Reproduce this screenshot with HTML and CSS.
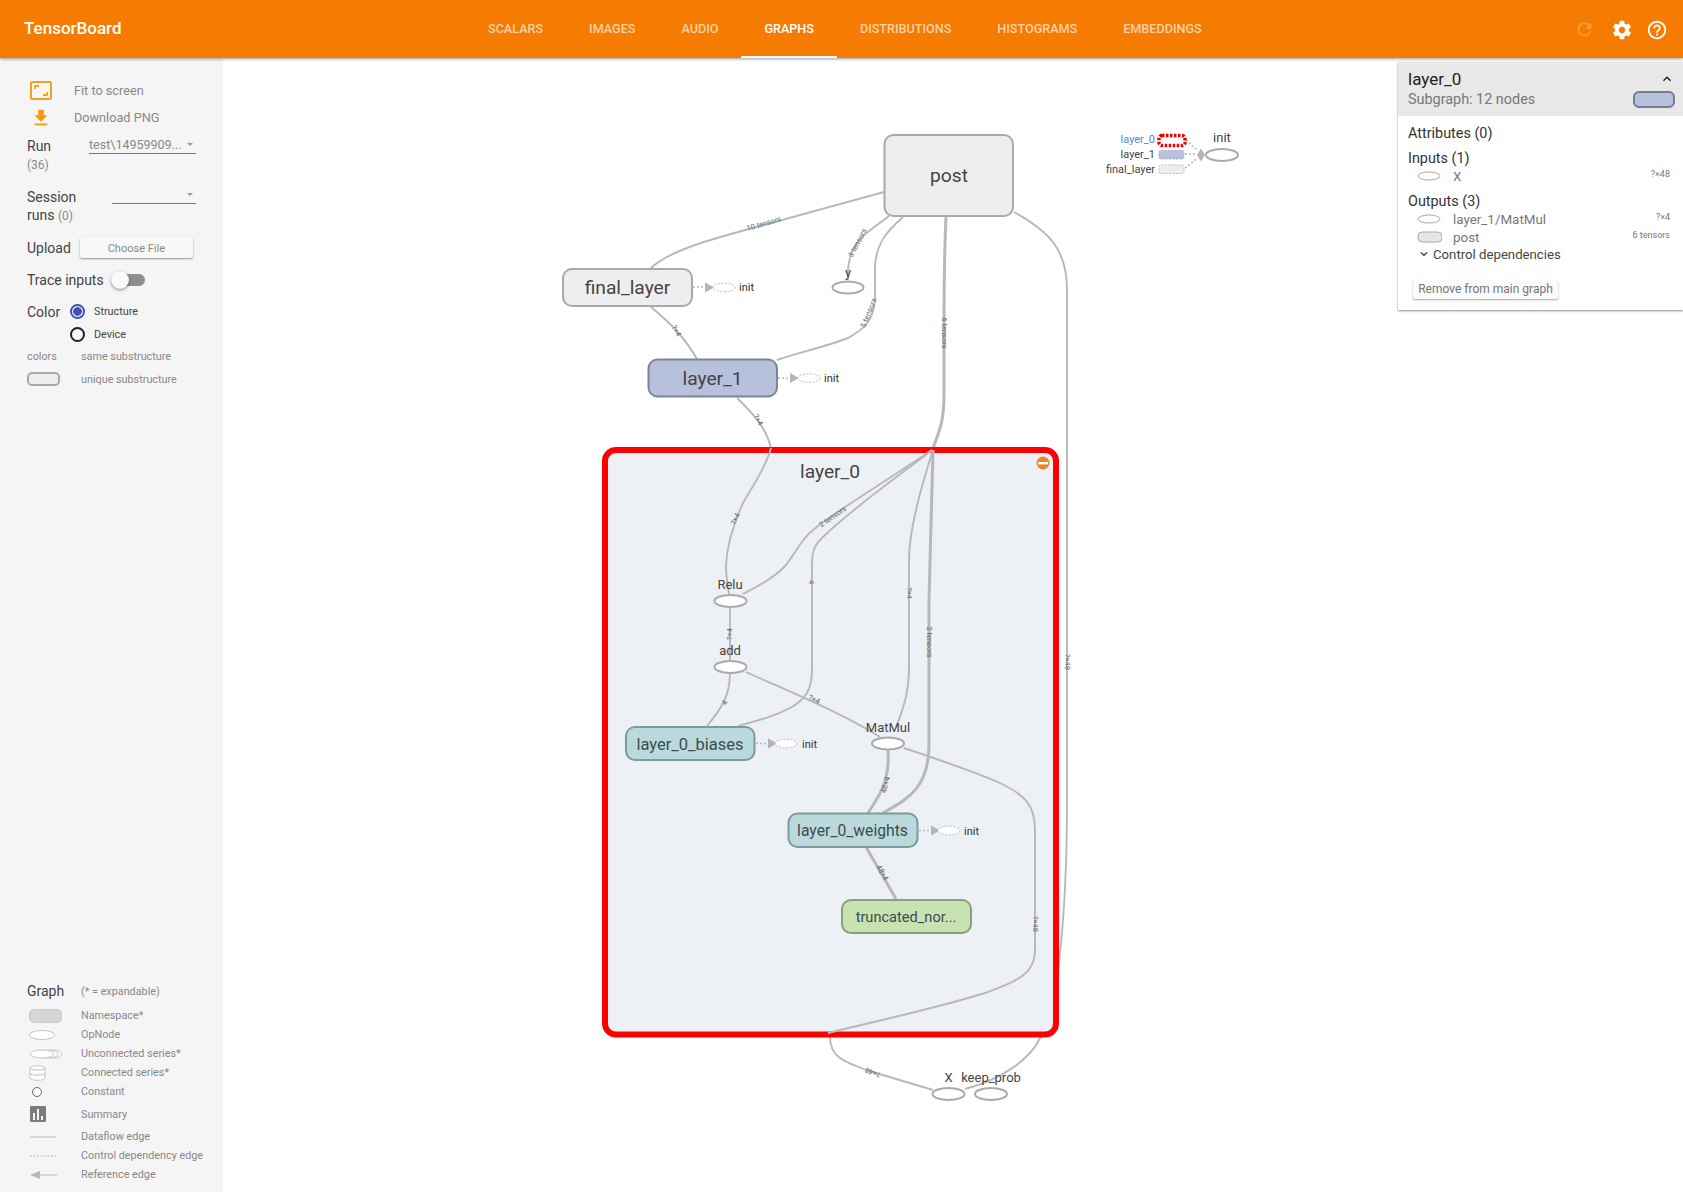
FILE: index.html
```html
<!DOCTYPE html>
<html lang="en">
<head>
<meta charset="utf-8">
<title>TensorBoard</title>
<link rel="stylesheet" href="styles.css">
</head>
<body>
<header class="topbar">
  <div class="logo">TensorBoard</div>
  <nav class="tabs">
    <a class="tab">SCALARS</a>
    <a class="tab">IMAGES</a>
    <a class="tab">AUDIO</a>
    <a class="tab active">GRAPHS</a>
    <a class="tab">DISTRIBUTIONS</a>
    <a class="tab">HISTOGRAMS</a>
    <a class="tab">EMBEDDINGS</a>
  </nav>
  <div class="top-icons">
    <svg class="ti dim" viewBox="0 0 24 24"><path d="M17.65 6.35C16.2 4.9 14.21 4 12 4c-4.42 0-7.99 3.58-7.99 8s3.57 8 7.99 8c3.73 0 6.84-2.55 7.73-6h-2.08c-.82 2.33-3.04 4-5.65 4-3.31 0-6-2.69-6-6s2.69-6 6-6c1.66 0 3.14.69 4.22 1.78L13 11h7V4l-2.35 2.35z"/></svg>
    <svg class="ti" viewBox="0 0 24 24"><path d="M19.43 12.98c.04-.32.07-.64.07-.98s-.03-.66-.07-.98l2.11-1.65c.19-.15.24-.42.12-.64l-2-3.46c-.12-.22-.39-.3-.61-.22l-2.49 1c-.52-.4-1.08-.73-1.69-.98l-.38-2.65C14.46 2.18 14.25 2 14 2h-4c-.25 0-.46.18-.49.42l-.38 2.65c-.61.25-1.17.59-1.69.98l-2.49-1c-.23-.09-.49 0-.61.22l-2 3.46c-.13.22-.07.49.12.64l2.11 1.65c-.04.32-.07.65-.07.98s.03.66.07.98l-2.11 1.65c-.19.15-.24.42-.12.64l2 3.46c.12.22.39.3.61.22l2.49-1c.52.4 1.08.73 1.69.98l.38 2.65c.03.24.24.42.49.42h4c.25 0 .46-.18.49-.42l.38-2.65c.61-.25 1.17-.59 1.69-.98l2.49 1c.23.09.49 0 .61-.22l2-3.46c.12-.22.07-.49-.12-.64l-2.11-1.65zM12 15.5c-1.93 0-3.5-1.57-3.5-3.5s1.57-3.5 3.5-3.5 3.5 1.57 3.5 3.5-1.57 3.5-3.5 3.5z"/></svg>
    <svg class="ti" viewBox="0 0 24 24"><path d="M11 18h2v-2h-2v2zm1-16C6.48 2 2 6.48 2 12s4.48 10 10 10 10-4.48 10-10S17.52 2 12 2zm0 18c-4.41 0-8-3.59-8-8s3.59-8 8-8 8 3.59 8 8-3.59 8-8 8zm0-14c-2.21 0-4 1.79-4 4h2c0-1.1.9-2 2-2s2 .9 2 2c0 2-3 1.75-3 5h2c0-2.25 3-2.5 3-5 0-2.21-1.79-4-4-4z"/></svg>
  </div>
</header>

<div class="main">
  <aside class="sidebar">
    <div class="controls">
      <div class="action">
        <span class="action-icon"><svg width="22" height="19" viewBox="0 0 22 19"><rect x="1" y="1" width="20" height="17" rx="1" class="fit-frame"/><path d="M5 8V5h4M17 11v3h-4" class="fit-corner"/></svg></span>
        <span>Fit to screen</span>
      </div>
      <div class="action">
        <span class="action-icon"><svg width="22" height="22" viewBox="0 0 24 24"><path class="orange" d="M19 9h-4V3H9v6H5l7 7 7-7zM5 18v2h14v-2H5z"/></svg></span>
        <span>Download PNG</span>
      </div>
      <div class="pick-row run-row">
        <div class="pick-label">Run<small class="count">(36)</small></div>
        <div class="select run-select"><span class="select-text">test\14959909...</span><i class="caret"></i></div>
      </div>
      <div class="pick-row session-row">
        <div class="pick-label">Session<br>runs <small class="count-inline">(0)</small></div>
        <div class="select session-select"><i class="caret"></i></div>
      </div>
      <div class="upload-row">
        <span class="label">Upload</span>
        <button class="file-btn">Choose File</button>
      </div>
      <div class="trace-row">
        <span class="label">Trace inputs</span>
        <span class="toggle"><i class="track"></i><i class="thumb"></i></span>
      </div>
      <div class="color-row">
        <span class="label color-label">Color</span>
        <i class="radio on"></i><span class="radio-text">Structure</span>
      </div>
      <div class="color-row device">
        <i class="radio"></i><span class="radio-text">Device</span>
      </div>
      <div class="legend-row key">
        <span class="key-swatch">colors</span><span>same substructure</span>
      </div>
      <div class="legend-row key">
        <span class="key-swatch"><i class="unique"></i></span><span>unique substructure</span>
      </div>
    </div>

    <div class="legend">
      <div class="legend-head"><span class="label graph-label">Graph</span><span>(* = expandable)</span></div>
      <div class="legend-row"><span class="key-swatch"><i class="ns"></i></span><span>Namespace*</span></div>
      <div class="legend-row"><span class="key-swatch"><svg width="36" height="14" viewBox="0 0 36 14"><ellipse cx="14" cy="7" rx="12.5" ry="4.5" class="lg"/></svg></span><span>OpNode</span></div>
      <div class="legend-row"><span class="key-swatch"><svg width="36" height="14" viewBox="0 0 36 14"><ellipse cx="25" cy="7" rx="9" ry="4" class="lg"/><ellipse cx="21" cy="7" rx="9" ry="4" class="lg"/><ellipse cx="14" cy="7" rx="12" ry="4" class="lg"/></svg></span><span>Unconnected series*</span></div>
      <div class="legend-row"><span class="key-swatch"><svg width="36" height="16" viewBox="0 0 36 16"><path class="lg" d="M2 3c0-3 15-3 15 0v10c0 3-15 3-15 0zM2 3c0 3 15 3 15 0M2 8c0 3 15 3 15 0"/></svg></span><span>Connected series*</span></div>
      <div class="legend-row"><span class="key-swatch"><svg width="36" height="14" viewBox="0 0 36 14"><circle cx="9" cy="7" r="4.5" class="lg dark"/></svg></span><span>Constant</span></div>
      <div class="legend-row summary"><span class="key-swatch"><svg width="36" height="18" viewBox="0 0 36 18"><rect x="2" y="1" width="16" height="16" rx="1" fill="#7b7b7b"/><path d="M5 8h2v7H5zM9 4h2v11H9zM13 11h2v4h-2z" fill="#f5f5f5"/></svg></span><span>Summary</span></div>
      <div class="legend-row"><span class="key-swatch"><svg width="36" height="6" viewBox="0 0 36 6"><path d="M2 3h26" class="line"/></svg></span><span>Dataflow edge</span></div>
      <div class="legend-row"><span class="key-swatch"><svg width="36" height="6" viewBox="0 0 36 6"><path d="M2 3h26" class="line dash"/></svg></span><span>Control dependency edge</span></div>
      <div class="legend-row"><span class="key-swatch"><svg width="36" height="10" viewBox="0 0 36 10"><path d="M8 5h21" class="line"/><path d="M2 5l10-4v8z" fill="#b8b8b8"/></svg></span><span>Reference edge</span></div>
    </div>
  </aside>

  <section class="canvas">
    <svg class="graph" width="1460" height="1134" viewBox="223 58 1460 1134">
      <g class="edge">
        <path d="M1014 212C1050 232 1067 250 1067 290L1067 800C1067 870 1064 920 1059 962C1056 1000 1050 1020 1040 1038C1030 1060 1000 1080 965 1089"/>
        <path d="M884 192L760 226C715 238 670 250 651 268"/>
        <path d="M651 307C670 323 683 335 697 359"/>
        <path d="M889 216C868 233 846 240 848 280"/>
        <path d="M903 217C885 233 875 245 875 270L875 296C875 322 862 330 848 338C825 347 800 352 777 360"/>
        <path class="thick" d="M946 217C944 260 944 300 944 330L944 395C944 420 940 430 933 448"/>
        <path d="M737 398C755 415 767 430 771 448"/>
        <path d="M830 1037C830 1060 850 1063 866 1070L933 1090"/>
      </g>

      <rect class="box" x="605" y="450" width="451" height="584.500" rx="11"/>

      <g class="edge">
        <path d="M771 448C765 470 750 490 743 503C733 525 727 545 726 565C726 578 728 586 729 594"/>
        <path d="M743 594C760 585 775 577 785 566C795 555 800 540 813 530C830 515 880 485 932 450"/>
        <path d="M707 726C722 708 730 695 730 673"/>
        <path d="M738 726C760 720 775 716 790 708C805 700 812 690 812 670L812 565C812 550 815 545 822 538C850 510 900 475 932 450"/>
        <path d="M730 607L730 660"/>
        <path d="M746 672C790 692 840 712 880 737"/>
        <path d="M896 727C905 705 909 690 909 665L909 560C909 530 920 490 933 450"/>
        <path class="thick" d="M883 813C905 800 929 790 929 745L929 600L933 450"/>
        <path class="thick" d="M888 750C890 780 880 795 868 813"/>
        <path class="thick" d="M866 847L896 899"/>
        <path d="M904 748C940 760 975 772 1000 783C1025 795 1035 805 1035 830L1035 950C1035 975 1015 982 985 993C930 1010 880 1020 828 1033"/>
      </g>

      <g class="elabel">
        <text transform="translate(764 224) rotate(-16)">10 tensors</text>
        <text transform="translate(858 243) rotate(-62)">3 tensors</text>
        <text transform="translate(869 313) rotate(-68)">5 tensors</text>
        <text transform="translate(944 333) rotate(90)">6 tensors</text>
        <text transform="translate(676 331) rotate(60)">?×4</text>
        <text transform="translate(758 420) rotate(60)">?×4</text>
        <text transform="translate(736 519) rotate(-65)">?×4</text>
        <text transform="translate(833 517) rotate(-35)">2 tensors</text>
        <text transform="translate(811 582) rotate(90)">4</text>
        <text transform="translate(730 634) rotate(-90)">?×4</text>
        <text transform="translate(725 703) rotate(-60)">4</text>
        <text transform="translate(814 700) rotate(25)">?×4</text>
        <text transform="translate(909 593) rotate(90)">?×4</text>
        <text transform="translate(929 642) rotate(90)">2 tensors</text>
        <text transform="translate(886 785) rotate(-75)">48×4</text>
        <text transform="translate(882 873) rotate(60)">48×4</text>
        <text transform="translate(1035 924) rotate(90)">?×48</text>
        <text transform="translate(1067 662) rotate(90)">?×48</text>
        <text transform="translate(873 1072) rotate(200)">?×48</text>
      </g>

      <circle class="minus-bg" cx="1043" cy="463" r="6.500"/>
      <rect class="minus-bar" x="1038" y="462" width="10" height="2.400"/>

      <g class="ctrl">
        <path d="M693 287H706"/><path d="M778 378H791"/><path d="M756 743.500H769"/><path d="M919 830.500H932"/>
        <path d="M1186 140L1198 151"/><path d="M1185 154H1197"/><path d="M1185 168L1198 158"/>
      </g>
      <g class="arrow">
        <path d="M705 282.500L714 287.500L705 292.500Z"/><path d="M790 373L799 378L790 383Z"/>
        <path d="M768 738.500L777 743.500L768 748.500Z"/><path d="M931 825.500L940 830.500L931 835.500Z"/>
        <path d="M1201 148.500L1205 155L1201 161.500L1197 155Z"/>
      </g>
      <g class="dashed-op">
        <ellipse cx="724" cy="287.500" rx="11" ry="4.300"/><ellipse cx="809" cy="378" rx="11" ry="4.300"/>
        <ellipse cx="786" cy="743.500" rx="11" ry="4.300"/><ellipse cx="949" cy="830.500" rx="11" ry="4.300"/>
      </g>

      <g class="op">
        <ellipse cx="848" cy="287.500" rx="15.500" ry="6"/>
        <ellipse cx="730.500" cy="601" rx="16" ry="6"/>
        <ellipse cx="730.500" cy="667" rx="16" ry="6"/>
        <ellipse cx="888" cy="743.500" rx="16" ry="6"/>
        <ellipse cx="948.500" cy="1094" rx="16" ry="6"/>
        <ellipse cx="991" cy="1094" rx="16" ry="6"/>
        <ellipse cx="1222" cy="155" rx="16" ry="6"/>
      </g>

      <rect class="node gray" x="884.500" y="135" width="128.500" height="81" rx="9"/>
      <rect class="node gray" x="563" y="269" width="129" height="37" rx="9"/>
      <rect class="node blue" x="648.500" y="359.500" width="128.500" height="37" rx="9"/>
      <rect class="node teal" x="626" y="727" width="128.500" height="33" rx="9"/>
      <rect class="node teal" x="788.500" y="813.500" width="129" height="33.500" rx="9"/>
      <rect class="node green" x="842" y="900" width="129" height="33" rx="9"/>

      <g class="big">
        <text x="949" y="182">post</text>
        <text x="627.500" y="294">final_layer</text>
        <text x="712.500" y="385">layer_1</text>
        <text x="830" y="478">layer_0</text>
      </g>
      <g class="mid">
        <text class="biases" x="690" y="749.500">layer_0_biases</text>
        <text class="weights" x="852.500" y="835.500">layer_0_weights</text>
        <text class="trunc" x="906" y="921.500">truncated_nor...</text>
      </g>
      <g class="op-label">
        <text x="848" y="277">y</text>
        <text x="730" y="588.500">Relu</text>
        <text x="730" y="654.500">add</text>
        <text x="888" y="731.500">MatMul</text>
        <text x="948.500" y="1082">X</text>
        <text x="991" y="1082">keep_prob</text>
        <text x="1222" y="142">init</text>
      </g>
      <g class="init">
        <text x="739" y="291">init</text>
        <text x="824" y="382">init</text>
        <text x="802" y="747.500">init</text>
        <text x="964" y="834.500">init</text>
      </g>

      <rect class="aux-red" x="1159" y="135.500" width="26" height="10" rx="3"/>
      <rect class="aux-blue" x="1159" y="150.500" width="25" height="8.500" rx="2"/>
      <rect class="aux-gray" x="1159" y="165" width="25" height="8.500" rx="2"/>
      <g class="aux-label">
        <text class="selected" x="1155" y="143">layer_0</text>
        <text x="1155" y="158">layer_1</text>
        <text x="1155" y="173">final_layer</text>
      </g>
    </svg>

    <div class="card">
      <div class="card-head">
        <div class="card-title-row">
          <span class="card-title">layer_0</span>
          <svg class="chev-up" width="16" height="16" viewBox="0 0 24 24"><path d="M7.41 15.41L12 10.83l4.59 4.58L18 14l-6-6-6 6z"/></svg>
        </div>
        <div class="card-sub-row">
          <span class="card-sub">Subgraph: 12 nodes</span>
          <i class="card-swatch"></i>
        </div>
      </div>
      <div class="card-body">
        <div class="sec">Attributes (0)</div>
        <div class="sec tight">Inputs (1)</div>
        <div class="io"><svg class="io-ic" width="26" height="12" viewBox="0 0 26 12"><ellipse cx="13" cy="6" rx="11" ry="4" class="op-ic"/></svg><span class="io-name">X</span><span class="io-shape">?×48</span></div>
        <div class="sec outputs">Outputs (3)</div>
        <div class="io"><svg class="io-ic" width="26" height="12" viewBox="0 0 26 12"><ellipse cx="13" cy="6" rx="11" ry="4" class="op-ic"/></svg><span class="io-name">layer_1/MatMul</span><span class="io-shape">?×4</span></div>
        <div class="io"><svg class="io-ic" width="26" height="12" viewBox="0 0 26 12"><rect x="2" y="1" width="24" height="10" rx="4" class="ns-ic"/></svg><span class="io-name">post</span><span class="io-shape">6 tensors</span></div>
        <div class="deps"><svg width="14" height="14" viewBox="0 0 24 24"><path d="M7.41 8.59L12 13.17l4.59-4.58L18 10l-6 6-6-6z"/></svg><span>Control dependencies</span></div>
        <button class="remove-btn">Remove from main graph</button>
      </div>
    </div>
  </section>
</div>
</body>
</html>
```
FILE: styles.css
```css
* { box-sizing: border-box; }
html, body { margin: 0; height: 100%; }
body {
  font-family: Roboto, "Noto Sans", sans-serif;
  background: #fff;
  color: #333;
  overflow: hidden;
  width: 1683px;
  height: 1192px;
  display: flex;
  flex-direction: column;
}

/* top bar */
.topbar {
  height: 58px;
  flex: none;
  background: #f57c00;
  display: flex;
  align-items: stretch;
  position: relative;
  z-index: 3;
  box-shadow: 0 1px 3px rgba(0, 0, 0, .4);
  color: #fff;
}
.logo {
  width: 465px;
  padding-left: 24px;
  font-size: 17px;
  font-weight: 500;
  line-height: 57px;
}
.tabs { display: flex; }
.tab {
  padding: 0 23px;
  font-size: 12.62px;
  font-weight: 500;
  line-height: 57px;
  color: rgba(255, 255, 255, .66);
}
.tab.active {
  color: #fff;
  border-bottom: 2px solid #fff;
  height: 58px;
  line-height: 57px;
}
.top-icons {
  margin-left: auto;
  display: flex;
  align-items: center;
  gap: 13px;
  padding-right: 15px;
  padding-top: 1px;
}
.ti { width: 22px; height: 22px; fill: #fff; }
.ti.dim { fill: rgba(255, 255, 255, .25); width: 21px; height: 21px; margin-right: 3px; }

/* layout */
.main { flex: 1; display: flex; min-height: 0; }
.sidebar {
  width: 223px;
  flex: none;
  background: #f5f5f5;
  padding: 19px 0 8px 27px;
  display: flex;
  flex-direction: column;
  justify-content: space-between;
  font-size: 10.8px;
  color: #888;
}
.label { font-size: 14px; color: #444; }

.action { display: flex; align-items: center; height: 27px; font-size: 12.7px; color: #888; }
.action-icon { width: 47px; display: flex; justify-content: flex-start; padding-left: 3px; }
.fit-frame { fill: none; stroke: #f5a11f; stroke-width: 2; }
.fit-corner { fill: none; stroke: #f5a11f; stroke-width: 1.8; }
.orange { fill: #f59a0c; }

.pick-row { display: flex; justify-content: space-between; padding-right: 27px; }
.run-row { height: 56.5px; padding-top: 6px; }
.session-row { height: 48px; }
.pick-label { font-size: 14px; color: #444; line-height: 18px; }
.count { display: block; font-size: 12px; color: #888; line-height: 20px; }
.count-inline { font-size: 12px; color: #888; }
.select {
  height: 17px;
  border-bottom: 1px solid #777;
  font-size: 12.5px;
  color: #888;
  line-height: 16px;
  position: relative;
}
.run-select { width: 107px; }
.session-select { width: 84px; margin-top: -1px; }
.caret {
  position: absolute;
  right: 3px;
  top: 6px;
  border: 3px solid transparent;
  border-top: 3px solid #999;
  border-bottom: 0;
}
.upload-row { display: flex; align-items: center; height: 24px; }
.file-btn {
  width: 113px;
  height: 21px;
  margin-left: 9px;
  border: 0;
  background: #f8f8f8;
  color: #888;
  font: 11px/21px Roboto, sans-serif;
  padding: 1px 0 0;
  border-radius: 2px;
  box-shadow: 0 1px 2px rgba(0, 0, 0, .4);
}
.trace-row { display: flex; align-items: center; height: 22px; margin-top: 9px; }
.toggle { position: relative; width: 34px; height: 18px; margin-left: 7px; }
.track { position: absolute; left: 8px; top: 3px; width: 26px; height: 12px; border-radius: 6px; background: #8e8e8e; }
.thumb { position: absolute; left: 0; top: 0; width: 18px; height: 18px; border-radius: 50%; background: #fafafa; box-shadow: 0 1px 3px rgba(0, 0, 0, .45); }
.color-row { display: flex; align-items: center; height: 22px; margin-top: 10px; position: relative; }
.color-row.device { margin-top: 1px; padding-left: 43px; }
.color-label { width: 43px; }
.radio { width: 15px; height: 15px; border-radius: 50%; border: 2px solid #222; background: transparent; flex: none; }
.radio.on { border-color: #3f51b5; background: radial-gradient(circle, #3f51b5 0 4px, transparent 4.6px); }
.radio-text { margin-left: 9px; font-size: 10.8px; color: #444; }
.legend-row { display: flex; align-items: center; height: 19px; }
.legend-row.key { height: 22.5px; }
.key-swatch { width: 54px; display: flex; flex: none; }
.unique { width: 33px; height: 14px; background: #eee; border: 2px solid #aaa; border-radius: 5px; }

.legend-head { display: flex; align-items: center; height: 20px; margin-bottom: 5px; }
.graph-label { width: 54px; }
.ns { width: 33px; height: 14px; margin-left: 2px; background: #d6d6d6; border: 1px solid #ccc; border-radius: 5px; }
.legend-row .key-swatch svg { display: block; margin-left: 1px; }
.legend-row.summary { height: 26px; }
.lg { fill: #fff; stroke: #c4c4c4; stroke-width: 1; }
.lg.dark { stroke: #666; }
.line { stroke: #bbb; stroke-width: 1; fill: none; }
.line.dash { stroke-dasharray: 2 1.5; }

/* graph */
.canvas { flex: 1; position: relative; min-width: 0; }
.graph { display: block; }
.edge path { fill: none; stroke: #b8b8b8; stroke-width: 1.9; }
.edge path.thick { stroke-width: 3; }
.elabel text { font-size: 7.5px; fill: #666; text-anchor: middle; dominant-baseline: middle; }
.box { fill: #edf0f5; stroke: #f00; stroke-width: 6; }
.minus-bg { fill: #e8872a; }
.minus-bar { fill: #fff; }
.ctrl path { fill: none; stroke: #b5b5b5; stroke-width: 1.5; stroke-dasharray: 2 2; }
.arrow path { fill: #b5b5b5; }
.dashed-op ellipse { fill: #fff; stroke: #bbb; stroke-width: 1; stroke-dasharray: 2 1.5; }
.op ellipse { fill: #fff; stroke: #aaa; stroke-width: 2; }
.node { stroke-width: 2; }
.node.gray { fill: #eee; stroke: #a9a9a9; }
.node.blue { fill: #b7c1dc; stroke: #7c8499; }
.node.teal { fill: #b9d9dc; stroke: #7d9a9c; }
.node.green { fill: #c6e3b1; stroke: #87a07b; }
.big text { font-size: 19.2px; fill: #444; text-anchor: middle; }
.mid text { fill: #3f4a4c; text-anchor: middle; }
.mid .biases { font-size: 16.5px; }
.mid .weights { font-size: 15.7px; }
.mid .trunc { font-size: 14.6px; }
.op-label text { font-size: 13px; fill: #444; text-anchor: middle; }
.init text { font-size: 11px; fill: #333; }
.aux-label text { font-size: 11px; fill: #444; text-anchor: end; }
.aux-label text.selected { fill: #4f86d8; }
.aux-red { fill: #fff; stroke: #e00; stroke-width: 3.5; stroke-dasharray: 2.5 1.5; }
.aux-blue { fill: #b7c1dc; stroke: #a4aec8; stroke-width: 1; stroke-dasharray: 2 1.5; }
.aux-gray { fill: #eee; stroke: #bbb; stroke-width: 1; stroke-dasharray: 2 1.5; }

/* info card */
.card {
  position: absolute;
  top: 4px;
  right: 0;
  width: 285px;
  height: 248px;
  background: #fff;
  box-shadow: 0 1px 2px rgba(0, 0, 0, .45);
}
.card-head { height: 54px; background: #e8e8e8; padding: 8px 8px 0 10px; }
.card-title-row { display: flex; justify-content: space-between; align-items: center; height: 18px; }
.card-title { font-size: 17px; color: #222; }
.chev-up { fill: #222; }
.card-sub-row { display: flex; justify-content: space-between; align-items: center; height: 20px; margin-top: 1px; }
.card-sub { font-size: 14.4px; color: #777; }
.card-swatch { width: 42px; height: 17px; background: #b7c1dc; border: 2px solid #757d92; border-radius: 6px; }
.card-body { padding: 9px 13px 0 10px; }
.sec { font-size: 14.4px; color: #333; line-height: 18px; height: 25px; }
.sec.tight { height: 17px; }
.sec.outputs { margin-top: 8px; height: 17px; }
.io { display: flex; align-items: center; height: 18px; font-size: 13.4px; color: #777; padding-left: 8px; }
.io-ic { flex: none; margin-right: 11px; }
.op-ic { fill: #fff; stroke: #aaa; stroke-width: 1; }
.ns-ic { fill: #e6e6e6; stroke: #aaa; stroke-width: 1; }
.io-shape { margin-left: auto; font-size: 9px; color: #777; margin-top: -4px; }
.deps { display: flex; align-items: center; height: 18px; margin-top: -1px; font-size: 13.2px; color: #444; padding-left: 9px; gap: 2px; }
.deps svg { fill: #222; }
.remove-btn {
  display: block;
  margin: 17px 0 0 5px;
  width: 145px;
  height: 19px;
  border: 0;
  background: #fafafa;
  color: #777;
  font: 12px/19px Roboto, sans-serif;
  padding: 0;
  border-radius: 2px;
  box-shadow: 0 1px 2px rgba(0, 0, 0, .35);
}
```
